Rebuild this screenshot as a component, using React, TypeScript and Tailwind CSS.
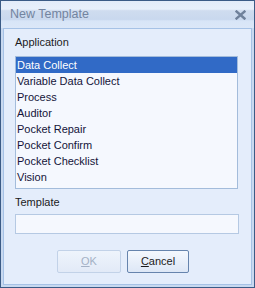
const apps = [
  'Data Collect',
  'Variable Data Collect',
  'Process',
  'Auditor',
  'Pocket Repair',
  'Pocket Confirm',
  'Pocket Checklist',
  'Vision',
];

export default function App() {
  const selected = 0;

  return (
    <div className="w-[255px] h-[288px] flex flex-col border border-[#3b5b86] bg-[#c8d9f0] font-['Liberation_Sans',sans-serif]">
      <div className="h-[27px] shrink-0 flex items-center justify-between pl-[9px] pr-[8px] bg-[linear-gradient(to_bottom,#e3ecf9_0%,#e8f0fb_30%,#cfdcef_36%,#c9d8ee_68%,#d8e5f7_74%,#dbe7f8_100%)]">
        <span className="text-[12.5px] text-[#7384a0] leading-none">New Template</span>
        <svg width="11" height="10" viewBox="0 0 11 10">
          <path d="M1.5 1.5 L9.5 8.5 M9.5 1.5 L1.5 8.5" stroke="#6f819b" strokeWidth="2.4" strokeLinecap="square" />
        </svg>
      </div>

      <div className="flex-1 mx-[2px] mb-[2px] border border-[#a6c2e6] bg-[#e4edfb] pl-[11px] pt-[7px]">
        <div className="text-[11px] leading-[13px] text-[#1b1b1b]">Application</div>
        <div className="mt-[7px] w-[223px] h-[133px] border border-[#a3bcdb] bg-[#f5f8fe]">
          {apps.map((name, i) => (
            <div
              key={name}
              className={`h-[16px] pl-[1px] text-[11px] leading-[16px] ${i === selected ? 'bg-[#316ac6] text-white' : 'text-[#14143a]'}`}
            >
              {name}
            </div>
          ))}
        </div>

        <div className="mt-[7px] text-[11px] leading-[13px] text-[#1b1b1b]">Template</div>
        <div className="mt-[5px] w-[224px] h-[20px] border border-[#b5c9e3] bg-[#f5f8fe]" />

        <div className="mt-[16px] ml-[42px] flex gap-[6px]">
          <button
            disabled
            className="w-[64px] h-[23px] rounded-[2px] border border-[#c2d2e8] bg-[linear-gradient(to_bottom,#eef4fc,#e2eaf7)] text-[11px] text-[#a4b1c5]"
          >
            <span className="underline">O</span>K
          </button>
          <button className="w-[62px] h-[23px] rounded-[2px] border border-[#6684ad] bg-[linear-gradient(to_bottom,#f4f8fe,#dde7f6)] text-[11px] text-[#1b1b1b]">
            <span className="underline">C</span>ancel
          </button>
        </div>
      </div>
    </div>
  );
}
